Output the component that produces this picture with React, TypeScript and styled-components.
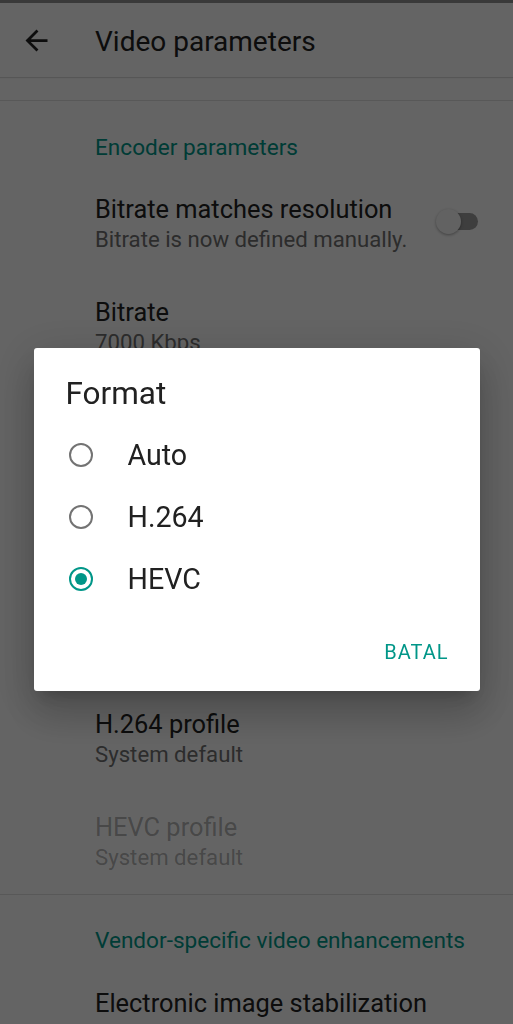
import * as React from 'react';
import styled, { createGlobalStyle } from 'styled-components';

const TEAL = '#009688';
const FONT = `Roboto, 'Liberation Sans', Arial, sans-serif`;

const GlobalStyle = createGlobalStyle`
  html, body {
    margin: 0;
    padding: 0;
    height: 100%;
    overflow: hidden;
    background: #fafafa;
    font-family: ${FONT};
  }
  * { box-sizing: border-box; }
`;

const Screen = styled.div`
  width: 513px;
  height: 1024px;
  overflow: hidden;
  background: #fafafa;
  display: flex;
  flex-direction: column;
`;

const StatusBar = styled.div`
  height: 3px;
  background: #8e8e8e;
  flex-shrink: 0;
`;

const AppBar = styled.header`
  height: 74px;
  flex-shrink: 0;
  display: flex;
  align-items: flex-start;
  padding-left: 19.5px;
  background: #fafafa;
  box-shadow: 0 1px 1px rgba(0, 0, 0, 0.14);
`;

const BackButton = styled.button`
  width: 33px;
  height: 33px;
  margin-top: 20.5px;
  padding: 0;
  border: 0;
  background: none;
  color: #212121;
  display: flex;

  svg {
    width: 33px;
    height: 33px;
  }
`;

const AppTitle = styled.h1`
  margin: 25.4px 0 0 42.5px;
  font-size: 28px;
  line-height: 28px;
  font-weight: 400;
  color: #212121;
`;

const PrefList = styled.div`
  padding-top: 23px;
  display: flex;
  flex-direction: column;
`;

const Divider = styled.div`
  height: 1px;
  background: rgba(0, 0, 0, 0.12);
  flex-shrink: 0;
`;

const Category = styled.div`
  height: 71.5px;
  flex-shrink: 0;
  padding: 35.5px 0 0 95px;
  font-size: 22.6px;
  line-height: 22px;
  color: ${TEAL};
  white-space: nowrap;
`;

const Item = styled.div`
  height: 103px;
  flex-shrink: 0;
  display: flex;
  align-items: center;
  padding: 0 35px 0 95px;
`;

const ItemText = styled.div`
  flex: 1;
  min-width: 0;
`;

const ItemTitle = styled.div<{ $disabled?: boolean }>`
  font-size: 25.4px;
  line-height: 31px;
  color: ${(p) => (p.$disabled ? 'rgba(0, 0, 0, 0.3)' : '#212121')};
  white-space: nowrap;
`;

const ItemSummary = styled.div<{ $disabled?: boolean }>`
  font-size: 22.2px;
  line-height: 29px;
  color: ${(p) => (p.$disabled ? 'rgba(0, 0, 0, 0.3)' : '#6f6f6f')};
  white-space: nowrap;
`;

const Switch = styled.div`
  position: relative;
  width: 42px;
  height: 25px;
  margin-bottom: 6px;
  flex-shrink: 0;
`;

const SwitchTrack = styled.div`
  position: absolute;
  left: 4px;
  top: 4px;
  width: 38px;
  height: 17px;
  border-radius: 9px;
  background: rgba(0, 0, 0, 0.38);
`;

const SwitchThumb = styled.div`
  position: absolute;
  left: 0;
  top: 0;
  width: 25px;
  height: 25px;
  border-radius: 50%;
  background: #f5f5f5;
  box-shadow: 0 1px 3px rgba(0, 0, 0, 0.35);
`;

const Scrim = styled.div`
  position: fixed;
  inset: 0;
  z-index: 10;
  background: rgba(0, 0, 0, 0.6);
  display: flex;
  align-items: center;
  justify-content: center;
  padding-top: 15px;
`;

const Dialog = styled.div`
  width: 446px;
  background: #fff;
  border-radius: 3px;
  padding-top: 25.5px;
  box-shadow: 0 11px 15px -7px rgba(0, 0, 0, 0.2), 0 24px 38px 3px rgba(0, 0, 0, 0.14),
    0 9px 46px 8px rgba(0, 0, 0, 0.12);
`;

const DialogTitle = styled.h2`
  margin: 0 0 10.5px;
  padding-left: 32px;
  font-size: 31.5px;
  line-height: 40px;
  font-weight: 400;
  color: #212121;
`;

const Option = styled.label`
  height: 62px;
  display: flex;
  align-items: center;
  gap: 35px;
  padding-left: 35px;
  font-size: 28.6px;
  line-height: 28px;
  color: #212121;
`;

const Radio = styled.span<{ $checked?: boolean }>`
  width: 24px;
  height: 24px;
  flex-shrink: 0;
  border-radius: 50%;
  border: 2.5px solid ${(p) => (p.$checked ? TEAL : '#737373')};
  display: flex;
  align-items: center;
  justify-content: center;

  &::after {
    content: '';
    width: 12px;
    height: 12px;
    border-radius: 50%;
    background: ${TEAL};
    display: ${(p) => (p.$checked ? 'block' : 'none')};
  }
`;

const Actions = styled.div`
  display: flex;
  justify-content: flex-end;
  padding: 32px 31px 29px;
`;

const TextButton = styled.button`
  padding: 0;
  border: 0;
  background: none;
  font-family: ${FONT};
  font-size: 20px;
  line-height: 20px;
  font-weight: 400;
  letter-spacing: 1px;
  color: ${TEAL};
  text-transform: uppercase;
`;

function Pref({
  title,
  summary,
  disabled,
  children,
}: {
  title: string;
  summary?: string;
  disabled?: boolean;
  children?: React.ReactNode;
}) {
  return (
    <Item>
      <ItemText>
        <ItemTitle $disabled={disabled}>{title}</ItemTitle>
        {summary && <ItemSummary $disabled={disabled}>{summary}</ItemSummary>}
      </ItemText>
      {children}
    </Item>
  );
}

const formats = ['Auto', 'H.264', 'HEVC'];

export default function App() {
  const [format] = React.useState('HEVC');

  return (
    <>
      <GlobalStyle />
      <Screen>
        <StatusBar />
        <AppBar>
          <BackButton aria-label="Back">
            <svg viewBox="0 0 24 24" fill="currentColor">
              <path d="M20 11H7.83l5.59-5.59L12 4l-8 8 8 8 1.41-1.41L7.83 13H20v-2z" />
            </svg>
          </BackButton>
          <AppTitle>Video parameters</AppTitle>
        </AppBar>
        <PrefList>
          <Divider />
          <Category>Encoder parameters</Category>
          <Pref title="Bitrate matches resolution" summary="Bitrate is now defined manually.">
            <Switch>
              <SwitchTrack />
              <SwitchThumb />
            </Switch>
          </Pref>
          <Pref title="Bitrate" summary="7000 Kbps" />
          <Pref title="Format" summary="HEVC" />
          <Pref title="Key frame interval" summary="1 s" />
          <Pref title="Bitrate mode" summary="Variable" />
          <Pref title="H.264 profile" summary="System default" />
          <Pref title="HEVC profile" summary="System default" disabled />
          <Divider />
          <Category>Vendor-specific video enhancements</Category>
          <Pref title="Electronic image stabilization" summary="Off" />
        </PrefList>
      </Screen>
      <Scrim>
        <Dialog>
          <DialogTitle>Format</DialogTitle>
          {formats.map((f) => (
            <Option key={f}>
              <Radio $checked={f === format} />
              {f}
            </Option>
          ))}
          <Actions>
            <TextButton>Batal</TextButton>
          </Actions>
        </Dialog>
      </Scrim>
    </>
  );
}
